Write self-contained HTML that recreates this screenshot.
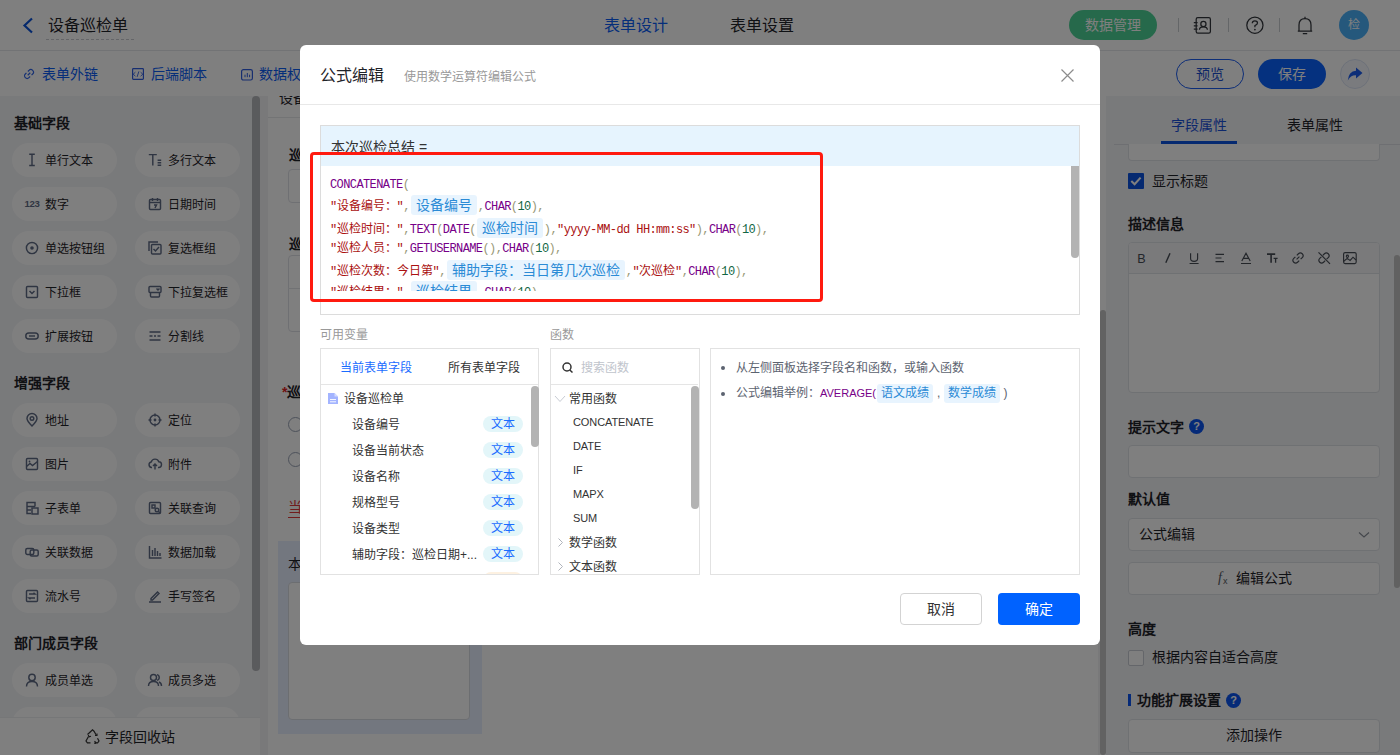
<!DOCTYPE html>
<html lang="zh-CN"><head><meta charset="utf-8">
<style>
*{box-sizing:border-box;margin:0;padding:0}
html,body{width:1400px;height:755px;overflow:hidden;background:#fff;font-family:"Liberation Sans",sans-serif;color:#333}
.abs{position:absolute}
svg{display:block}
/* header */
#hdr{position:absolute;left:0;top:0;width:1400px;height:51px;background:#fff;border-bottom:1px solid #e4e6ea}
#tb{position:absolute;left:0;top:51px;width:1400px;height:44px;background:#fff}
#lp{position:absolute;left:0;top:96px;width:260px;height:659px;background:#f3f4f7}
#cv{position:absolute;left:260px;top:96px;width:846px;height:659px;background:#f2f3f5;overflow:hidden}
#rp{position:absolute;left:1106px;top:96px;width:294px;height:659px;background:#f3f4f7}
.pill{position:absolute;width:105px;height:34px;border-radius:17px;background:#fff;font-size:12px;color:#1f2329;line-height:34px}
.pill .ic{position:absolute;left:12.5px;top:9.5px;width:14px;height:14px;overflow:visible}
.pill .ic path,.pill .ic rect,.pill .ic circle{stroke-width:1.45px}
.pill span{position:absolute;left:33px;top:1px}
.lh{position:absolute;left:14px;font-size:14px;font-weight:bold;color:#1f2329;line-height:16px}
#mask{position:absolute;left:0;top:0;width:1400px;height:755px;background:rgba(0,0,0,.5)}
#modal{position:absolute;left:300px;top:45px;width:800px;height:600px;background:#fff;border-radius:6px}
#red{position:absolute;left:310px;top:152px;width:513px;height:150px;border:3px solid #ff1a0f;border-radius:4px}

#ed{position:absolute;left:20px;top:80px;width:760px;height:190px;border:1px solid #dcdcdc;overflow:hidden}
#code{position:absolute;left:0;top:40px;width:748px;height:125px;overflow:hidden}
.cl{position:absolute;left:9px;height:20px;line-height:20px;white-space:nowrap;font-size:12px}
.cl span{display:inline-block;vertical-align:baseline}
.cf,.cb,.cn,.cs{font-family:"Liberation Mono",monospace;font-size:12px;letter-spacing:-0.6px}
.cf{color:#770088}.cb{color:#997}.cn{color:#116644}.cs{color:#aa1111}
.cz{font-family:"Liberation Sans",sans-serif;font-size:12px;letter-spacing:0}
.tag{background:#e8f4fe;color:#2b8bd6;font-size:14px;padding:0 5px;height:20px;line-height:20px;border-radius:3px;margin:0 1px}
#vbox{position:absolute;left:20px;top:303px;width:219px;height:227px;border:1px solid #e2e2e2}
#fbox{position:absolute;left:250px;top:303px;width:150px;height:227px;border:1px solid #e2e2e2}
#hbox{position:absolute;left:410px;top:303px;width:370px;height:227px;border:1px solid #e2e2e2}
.vrow{position:absolute;left:31px;font-size:12px;line-height:18px;color:#333;white-space:nowrap}
.vtag{position:absolute;left:162px;width:40px;height:16px;border-radius:8px;background:#e3f6f9;color:#1a6cff;font-size:12px;line-height:16px;text-align:center}
.frow{position:absolute;left:22px;font-size:11px;letter-spacing:-0.1px;line-height:18px;color:#333}
.htag{display:inline-block;background:#e8f4fe;color:#2b8bd6;padding:0 4px;height:19px;line-height:19px;border-radius:3px}
</style></head><body>
<div id="hdr">
 <svg class="abs" style="left:22px;top:17px" width="12" height="17" viewBox="0 0 12 17"><path d="M10 1.5 L2.5 8.5 L10 15.5" fill="none" stroke="#0a52d9" stroke-width="2.2"/></svg>
 <div class="abs" style="left:48px;top:15px;font-size:16px;line-height:22px;color:#1f2329">设备巡检单</div>
 <div class="abs" style="left:46px;top:39px;width:88px;border-top:1px dashed #c8cbd0"></div>
 <div class="abs" style="left:604px;top:15px;font-size:16px;line-height:22px;color:#0a5cf5">表单设计</div>
 <div class="abs" style="left:730px;top:15px;font-size:16px;line-height:22px;color:#1f2329">表单设置</div>
 <div class="abs" style="left:1069px;top:10px;width:88px;height:30px;border-radius:15px;background:#4cd296;color:#fff;font-size:14px;line-height:30px;text-align:center">数据管理</div>
 <div class="abs" style="left:1178px;top:18px;width:1px;height:14px;background:#c9ccd1"></div>
 <div class="abs" style="left:1228px;top:18px;width:1px;height:14px;background:#c9ccd1"></div>
 <div class="abs" style="left:1279px;top:18px;width:1px;height:14px;background:#c9ccd1"></div>
 <svg class="abs" style="left:1185px;top:10px" width="135" height="32" viewBox="1185 10 135 32"><g fill="none" stroke="#33363c" stroke-width="1.25">
  <rect x="1196.2" y="17.6" width="14.2" height="15.4" rx="1.6"/>
  <path d="M1193.8 22.5H1197.6M1193.8 25.8H1197.6M1193.8 29.1H1197.6"/>
  <circle cx="1203.4" cy="23.9" r="2.6"/><path d="M1199.4 29.8Q1199.6 26.9 1203.4 26.9Q1207.2 26.9 1207.4 29.8"/>
  <circle cx="1254.9" cy="25.2" r="8.1"/>
  <path d="M1252.3 23.2Q1252.3 20.9 1254.9 20.9Q1257.5 20.9 1257.5 23.1Q1257.5 24.6 1254.9 25.7V27.3"/>
  <path d="M1299 31V25Q1299 18.6 1305 18.6Q1311 18.6 1311 25V31ZM1297.8 31H1312.2" stroke-linejoin="round"/>
  <path d="M1305 16.8V18.4M1302.8 33.6H1307.2"/>
 </g><circle cx="1254.9" cy="29.6" r="0.85" fill="#33363c"/></svg>
 <div class="abs" style="left:1339px;top:10px;width:30px;height:30px;border-radius:15px;background:#4bb0f8;color:#fff;font-size:12px;line-height:31px;text-align:center">检</div>
</div>
<div id="tb">
 <svg class="abs" style="left:23px;top:17px" width="12" height="12" viewBox="0 0 12 12"><g transform="rotate(-45 6 6)" fill="none" stroke="#2f64e8" stroke-width="1.2"><path d="M5 3.4H3.4A2.6 2.6 0 0 0 3.4 8.6H5M7 3.4H8.6A2.6 2.6 0 0 1 8.6 8.6H7M4.2 6H7.8"/></g></svg>
 <div class="abs" style="left:42px;top:13px;font-size:14px;line-height:20px;color:#0a5cf5">表单外链</div>
 <svg class="abs" style="left:132px;top:17px" width="12" height="12" viewBox="0 0 12 12"><rect x="0.6" y="0.6" width="10.8" height="10.8" rx="0.8" fill="none" stroke="#2f5ce0" stroke-width="1.2"/><path d="M3.4 4.2L1.2 6.2L3.4 8.2M8.6 4.2L10.8 6.2L8.6 8.2M6.9 3.4L5.1 8.9" fill="none" stroke="#2f5ce0" stroke-width="0.9"/></svg>
 <div class="abs" style="left:151px;top:13px;font-size:14px;line-height:20px;color:#0a5cf5">后端脚本</div>
 <svg class="abs" style="left:241px;top:18px" width="12" height="12" viewBox="0 0 12 12"><rect x="0.6" y="0.6" width="10.8" height="10.4" rx="1.8" fill="none" stroke="#2f5ce0" stroke-width="1.2"/><path d="M4 5.7V8.2M6.3 4V8.2M8.6 5.7V8.2" stroke="#2f5ce0" stroke-width="1"/></svg>
 <div class="abs" style="left:259px;top:13px;font-size:14px;line-height:20px;color:#0a5cf5">数据权限</div>
 <div class="abs" style="left:1176px;top:8px;width:68px;height:30px;border-radius:15px;border:1px solid #1b5cf0;color:#1b4fd0;font-size:14px;line-height:28px;text-align:center">预览</div>
 <div class="abs" style="left:1258px;top:8px;width:68px;height:30px;border-radius:15px;background:#0a62ff;color:#fff;font-size:14px;line-height:30px;text-align:center">保存</div>
 <div class="abs" style="left:1340px;top:8px;width:30px;height:30px;border-radius:15px;background:#f4f7fd;border:1px solid #dbe3f3"></div>
 <svg class="abs" style="left:1346px;top:15px" width="18" height="16" viewBox="0 0 18 16"><path d="M10 1.5 L16.5 7 L10 12.5 V9.2 Q4.5 9 1.8 14.5 Q2.5 5.5 10 4.8 Z" fill="#1b5cf0"/></svg>
</div>
<div id="lp"><div class="abs" style="left:0;top:-1px;width:100%;height:660px">
 <div class="lh" style="top:20px">基础字段</div>
 <div class="pill" style="left:12px;top:48px"><svg class="ic" viewBox="0 0 14 14"><path d="M4.2 1.3h5.6M4.2 12.4h5.6M7 1.3v11.1" stroke="#5f6b85" stroke-width="1.3" fill="none"/></svg><span>单行文本</span></div>
 <div class="pill" style="left:135px;top:48px"><svg class="ic" viewBox="0 0 14 14"><path d="M0.8 1.6h8M4.8 1.6v11M9.6 7.2h3.6M9.6 9.7h3.6M9.6 12.2h3.6" stroke="#5f6b85" stroke-width="1.3" fill="none"/></svg><span>多行文本</span></div>
 <div class="pill" style="left:12px;top:92px"><svg class="ic" viewBox="0 0 14 14"><text x="-0.5" y="9.8" font-size="9.6" font-weight="bold" letter-spacing="-0.3" font-family="Liberation Sans" fill="#5f6b85">123</text></svg><span>数字</span></div>
 <div class="pill" style="left:135px;top:92px"><svg class="ic" viewBox="0 0 14 14"><rect x="1.5" y="2.5" width="11" height="10" rx="1" fill="none" stroke="#5f6b85" stroke-width="1.3"/><path d="M1.5 5.5h11M4.5 1v3M9.5 1v3M6 8h2.5L7 11" stroke="#5f6b85" stroke-width="1.1" fill="none"/></svg><span>日期时间</span></div>
 <div class="pill" style="left:12px;top:136px"><svg class="ic" viewBox="0 0 14 14"><circle cx="7" cy="7" r="5.6" fill="none" stroke="#5f6b85" stroke-width="1.3"/><circle cx="7" cy="7" r="1.8" fill="#5f6b85"/></svg><span>单选按钮组</span></div>
 <div class="pill" style="left:135px;top:136px"><svg class="ic" viewBox="0 0 14 14"><path d="M1 10V1h9" fill="none" stroke="#5f6b85" stroke-width="1.2"/><rect x="3.5" y="3.5" width="9.5" height="9.5" rx="1" fill="none" stroke="#5f6b85" stroke-width="1.3"/><path d="M5.5 8l2 2 3.5-4" fill="none" stroke="#5f6b85" stroke-width="1.3"/></svg><span>复选框组</span></div>
 <div class="pill" style="left:12px;top:180px"><svg class="ic" viewBox="0 0 14 14"><rect x="1.5" y="1.5" width="11" height="11" rx="1" fill="none" stroke="#5f6b85" stroke-width="1.3"/><path d="M4.5 6l2.5 2.5L9.5 6" fill="none" stroke="#5f6b85" stroke-width="1.2"/></svg><span>下拉框</span></div>
 <div class="pill" style="left:135px;top:180px"><svg class="ic" viewBox="0 0 14 14"><rect x="1" y="1.5" width="12" height="6" rx="1" fill="none" stroke="#5f6b85" stroke-width="1.3"/><path d="M2.5 7.5v3.5q0 1 1 1h7q1 0 1-1V7.5M8.5 3.5l1.5 1.5 1.5-1.5" fill="none" stroke="#5f6b85" stroke-width="1.3"/></svg><span>下拉复选框</span></div>
 <div class="pill" style="left:12px;top:224px"><svg class="ic" viewBox="0 0 14 14"><rect x="0.8" y="4" width="12.4" height="6" rx="3" fill="none" stroke="#5f6b85" stroke-width="1.4"/><path d="M4 7h6" stroke="#5f6b85" stroke-width="1.2"/></svg><span>扩展按钮</span></div>
 <div class="pill" style="left:135px;top:224px"><svg class="ic" viewBox="0 0 14 14"><path d="M1.5 3h11M1.5 11h11M1.5 7h3M6 7h2M9.5 7h3" stroke="#5f6b85" stroke-width="1.3" fill="none"/></svg><span>分割线</span></div>
 <div class="lh" style="top:280px">增强字段</div>
 <div class="pill" style="left:12px;top:308px"><svg class="ic" viewBox="0 0 14 14"><path d="M7 13Q2 8 2 5.5A5 5 0 0 1 12 5.5Q12 8 7 13Z" fill="none" stroke="#5f6b85" stroke-width="1.3"/><circle cx="7" cy="5.5" r="1.8" fill="none" stroke="#5f6b85" stroke-width="1.2"/></svg><span>地址</span></div>
 <div class="pill" style="left:135px;top:308px"><svg class="ic" viewBox="0 0 14 14"><circle cx="7" cy="7" r="5" fill="none" stroke="#5f6b85" stroke-width="1.3"/><circle cx="7" cy="7" r="1.4" fill="#5f6b85"/><path d="M7 0.5v3M7 10.5v3M0.5 7h3M10.5 7h3" stroke="#5f6b85" stroke-width="1.3"/></svg><span>定位</span></div>
 <div class="pill" style="left:12px;top:352px"><svg class="ic" viewBox="0 0 14 14"><rect x="1.5" y="1.5" width="11" height="11" rx="1" fill="none" stroke="#5f6b85" stroke-width="1.3"/><path d="M1.5 9.5l3.5-3 2.5 2 5-4" fill="none" stroke="#5f6b85" stroke-width="1.1"/><circle cx="4.5" cy="4.5" r="0.9" fill="#5f6b85"/></svg><span>图片</span></div>
 <div class="pill" style="left:135px;top:352px"><svg class="ic" viewBox="0 0 14 14"><path d="M4 10.5H3.5A2.8 2.8 0 0 1 3.2 5 A4 4 0 0 1 10.8 4.8 A2.8 2.8 0 0 1 10.5 10.5H10M7 12.5V7M5 9l2-2 2 2" fill="none" stroke="#5f6b85" stroke-width="1.3"/></svg><span>附件</span></div>
 <div class="pill" style="left:12px;top:396px"><svg class="ic" viewBox="0 0 14 14"><path d="M10 5.5V1.5H2V12.5H6M2 5.5h8M2 9h4" fill="none" stroke="#5f6b85" stroke-width="1.3"/><rect x="7" y="7" width="6" height="6" fill="none" stroke="#5f6b85" stroke-width="1.3"/></svg><span>子表单</span></div>
 <div class="pill" style="left:135px;top:396px"><svg class="ic" viewBox="0 0 14 14"><rect x="1.5" y="1.5" width="11" height="11" rx="1" fill="none" stroke="#5f6b85" stroke-width="1.3"/><path d="M4 4h3v3H4z" fill="none" stroke="#5f6b85" stroke-width="1.1"/><circle cx="9" cy="9" r="1.8" fill="none" stroke="#5f6b85" stroke-width="1.1"/><path d="M10.3 10.3l2 2" stroke="#5f6b85" stroke-width="1.1"/></svg><span>关联查询</span></div>
 <div class="pill" style="left:12px;top:440px"><svg class="ic" viewBox="0 0 14 14"><rect x="0.8" y="3.5" width="8" height="6" rx="1.5" fill="none" stroke="#5f6b85" stroke-width="1.3"/><rect x="5.2" y="5" width="8" height="6" rx="1.5" fill="none" stroke="#5f6b85" stroke-width="1.3"/></svg><span>关联数据</span></div>
 <div class="pill" style="left:135px;top:440px"><svg class="ic" viewBox="0 0 14 14"><path d="M1.5 1v12h12M4.5 5v6M7 3v8M9.5 6v5M12 8v3" fill="none" stroke="#5f6b85" stroke-width="1.3"/></svg><span>数据加载</span></div>
 <div class="pill" style="left:12px;top:484px"><svg class="ic" viewBox="0 0 14 14"><rect x="1.5" y="1.5" width="11" height="11" rx="1" fill="none" stroke="#5f6b85" stroke-width="1.3"/><path d="M4 5h6l-1.5-1.2M10 9H4l1.5 1.2" fill="none" stroke="#5f6b85" stroke-width="1.1"/></svg><span>流水号</span></div>
 <div class="pill" style="left:135px;top:484px"><svg class="ic" viewBox="0 0 14 14"><path d="M3 9.5l6.5-6.5 1.5 1.5L4.5 11H3zM1 13h12" fill="none" stroke="#5f6b85" stroke-width="1.3"/></svg><span>手写签名</span></div>
 <div class="lh" style="top:540px">部门成员字段</div>
 <div class="pill" style="left:12px;top:568px"><svg class="ic" viewBox="0 0 14 14"><circle cx="7" cy="4.5" r="3.2" fill="none" stroke="#5f6b85" stroke-width="1.3"/><path d="M1.5 13.5Q1.5 8.5 7 8.5Q12.5 8.5 12.5 13.5" fill="none" stroke="#5f6b85" stroke-width="1.3"/></svg><span>成员单选</span></div>
 <div class="pill" style="left:135px;top:568px"><svg class="ic" viewBox="0 0 14 14"><circle cx="5.5" cy="4.5" r="3" fill="none" stroke="#5f6b85" stroke-width="1.3"/><path d="M0.5 13Q0.5 8.5 5.5 8.5Q10.5 8.5 10.5 13M9 1.6A3 3 0 0 1 9 7.4M11 9Q13.5 10 13.5 13" fill="none" stroke="#5f6b85" stroke-width="1.3"/></svg><span>成员多选</span></div>
 <div class="pill" style="left:12px;top:612px"><svg class="ic" viewBox="0 0 14 14"></svg><span></span></div>
 <div class="pill" style="left:135px;top:612px"><svg class="ic" viewBox="0 0 14 14"></svg><span></span></div>
 <div class="abs" style="left:252px;top:1px;width:8px;height:575px;border-radius:4px;background:#b4b6ba"></div>
 <div class="abs" style="left:0;top:622px;width:260px;height:38px;background:#fff;border-top:1px solid #eceef1">
  <svg class="abs" style="left:85px;top:11px" width="15" height="15" viewBox="0 0 15 15"><path d="M6 2.2 L7.5 0.8 L9 2.2 L11.5 6.5 M12.5 9.2 L14 12 L12.6 13.8 H9.5 M5.5 13.8 H2.4 L1 12 L3.5 7.5 M2.5 5.5 L6 2.2" fill="none" stroke="#333" stroke-width="1.2"/><path d="M10 6.5 h2 v-2 M9.5 12.2 l1.5 1.6 -1.5 1.2 M3.2 6 l1 1.8 1.8-0.6" fill="none" stroke="#333" stroke-width="1.1"/></svg>
  <div class="abs" style="left:105px;top:10px;font-size:14px;line-height:18px;color:#1f2329">字段回收站</div>
 </div>
</div></div>
<div id="cv"><div class="abs" style="left:0;top:-1px;width:100%;height:660px">
 <div class="abs" style="left:8px;top:0;width:830px;height:660px;background:#fff"></div>
 <div class="abs" style="left:19px;top:-6px;font-size:14px;line-height:18px;color:#1f2329">设备巡检单</div>
 <div class="abs" style="left:8px;top:22px;width:830px;border-top:1px solid #e6e8eb"></div>
 <div class="abs" style="left:29px;top:52px;font-size:14px;font-weight:bold;line-height:16px;color:#1f2329">巡检人员</div>
 <div class="abs" style="left:28px;top:74px;width:300px;height:34px;border:1px solid #dfe1e6;border-radius:4px;background:#fff"></div>
 <div class="abs" style="left:29px;top:141px;font-size:14px;font-weight:bold;line-height:16px;color:#1f2329">巡检时间</div>
 <div class="abs" style="left:28px;top:160px;width:300px;height:77px;border:1px solid #dfe1e6;border-radius:4px;background:#fff"></div><div class="abs" style="left:28px;top:193px;width:300px;border-top:1px solid #e3e5e9"></div>
 <div class="abs" style="left:22px;top:289px;font-size:14px;font-weight:bold;line-height:16px;color:#1f2329"><span style="color:#e02020">*</span>巡检结果</div>
 <div class="abs" style="left:28px;top:322px;width:15px;height:15px;border:1px solid #9aa3b5;border-radius:50%;background:#fff"></div>
 <div class="abs" style="left:28px;top:357px;width:15px;height:15px;border:1px solid #9aa3b5;border-radius:50%;background:#fff"></div>
 <div class="abs" style="left:28px;top:404px;font-size:14px;line-height:16px;color:#e23b3b">当日巡检次数</div><div class="abs" style="left:28px;top:422px;width:84px;height:1px;background:#e23b3b"></div>
 <div class="abs" style="left:18px;top:446px;width:204px;height:193px;background:#e6efff"></div>
 <div class="abs" style="left:28px;top:461px;font-size:14px;line-height:16px;color:#1f2329">本次巡检总结</div>
 <div class="abs" style="left:28px;top:487px;width:182px;height:138px;border:1px solid #d9dce2;border-radius:4px;background:#fff"></div>
 <div class="abs" style="left:840px;top:0;width:6px;height:660px;background:#fff"></div>
 <div class="abs" style="left:840px;top:215px;width:6px;height:445px;border-radius:3px;background:#c4c4c4"></div>
</div></div>
<div id="rp"><div class="abs" style="left:0;top:-1px;width:100%;height:660px">
 <div class="abs" style="left:65px;top:22px;font-size:14px;line-height:16px;color:#1a50d8">字段属性</div>
 <div class="abs" style="left:181px;top:22px;font-size:14px;line-height:16px;color:#1f2329">表单属性</div>
 <div class="abs" style="left:8px;top:49px;width:286px;border-top:1px solid #dcdfe4"></div>
 <div class="abs" style="left:55px;top:46px;width:76px;height:3px;background:#0a52e0"></div>
 <div class="abs" style="left:22px;top:49px;width:252px;height:17px;border:1px solid #dfe2e7;border-top:none;border-radius:0 0 4px 4px;background:#fff"></div>
 <div class="abs" style="left:22px;top:78px;width:16px;height:16px;border-radius:1px;background:#0a52e0"></div>
 <svg class="abs" style="left:22px;top:78px" width="16" height="16" viewBox="0 0 16 16"><path d="M3.3 8 L6.6 11.2 L12.6 4.6" fill="none" stroke="#fff" stroke-width="2.1"/></svg>
 <div class="abs" style="left:46px;top:77px;font-size:14px;line-height:18px;color:#1f2329">显示标题</div>
 <div class="abs" style="left:22px;top:121px;font-size:14px;font-weight:bold;line-height:16px;color:#1f2329">描述信息</div>
 <div class="abs" style="left:22px;top:147px;width:252px;height:151px;border:1px solid #dfe2e7;border-radius:4px;background:#fff;overflow:hidden">
  <div class="abs" style="left:0;top:0;width:252px;height:31px;background:#f4f5f7;border-bottom:1px solid #dfe2e7"></div>
  <svg class="abs" style="left:-1px;top:-1px" width="252" height="32" viewBox="1128 242 252 32"><g fill="none" stroke="#474c55" stroke-width="1.15">
   <text x="1137.3" y="262.6" font-size="12.6" font-family="Liberation Sans" fill="#474c55" stroke="none">B</text>
   <path d="M1170 253.3 L1165.8 262.7" stroke-width="1.4"/>
   <path d="M1190.6 253.2 V258.6 Q1190.6 261.4 1194.1 261.4 Q1197.6 261.4 1197.6 258.6 V253.2 M1189.6 263.5 H1198.6"/>
   <path d="M1215.5 254.3 H1224 M1215.5 258 H1221.5 M1215.5 261.6 H1224"/>
   <path d="M1241.8 261 L1246 253.3 L1250.2 261 M1243.2 258.4 H1248.8 M1241 263.5 H1251"/>
   <path d="M1267 254.1 H1275.2 M1271.1 254.1 V262.8" stroke-width="1.6"/><path d="M1273.6 258.3 H1277.6 M1275.6 258.3 V262.8" stroke-width="1.3"/>
   <g transform="rotate(-45 1298 258)"><path d="M1297 255.3 H1294.7 A2.7 2.7 0 0 0 1294.7 260.7 H1297 M1299 255.3 H1301.3 A2.7 2.7 0 0 1 1301.3 260.7 H1299 M1296 258 H1300"/></g>
   <g transform="rotate(-45 1324 258)"><path d="M1323 255.3 H1320.7 A2.7 2.7 0 0 0 1320.7 260.7 H1323 M1325 255.3 H1327.3 A2.7 2.7 0 0 1 1327.3 260.7 H1325"/></g><path d="M1318.5 252.3 L1330 263.8"/>
   <rect x="1343.6" y="252.6" width="12.6" height="11" rx="1.5"/><circle cx="1347.4" cy="256.2" r="1.1"/><path d="M1343.8 261.3 L1347.2 258.4 L1350.1 260.4 L1353 257.2 L1356 260"/>
  </g></svg>
 </div>
 <div class="abs" style="left:22px;top:324px;font-size:14px;font-weight:bold;line-height:16px;color:#1f2329">提示文字</div>
 <div class="abs" style="left:83px;top:324px;width:15px;height:15px;border-radius:50%;background:#0b55f0;color:#fff;font-size:11px;font-weight:bold;line-height:15px;text-align:center">?</div>
 <div class="abs" style="left:22px;top:350px;width:252px;height:33px;border:1px solid #dfe2e7;border-radius:4px;background:#fff"></div>
 <div class="abs" style="left:22px;top:396px;font-size:14px;font-weight:bold;line-height:16px;color:#1f2329">默认值</div>
 <div class="abs" style="left:22px;top:423px;width:252px;height:33px;border:1px solid #dfe2e7;border-radius:4px;background:#fff"></div>
 <div class="abs" style="left:33px;top:431px;font-size:14px;line-height:17px;color:#1f2329">公式编辑</div>
 <svg class="abs" style="left:252px;top:436px" width="12" height="8" viewBox="0 0 12 8"><path d="M1 1.5 L6 6 L11 1.5" fill="none" stroke="#8a8f99" stroke-width="1.2"/></svg>
 <div class="abs" style="left:22px;top:467px;width:252px;height:33px;border:1px solid #dfe2e7;border-radius:4px;background:#fff"></div>
 <div class="abs" style="left:112px;top:474px;font-size:14px;line-height:18px;color:#55595f;font-style:italic;font-family:'Liberation Serif'">f<span style="font-size:9px;font-style:normal;font-family:'Liberation Sans';vertical-align:-2px;margin-left:1px">x</span></div>
 <div class="abs" style="left:130px;top:475px;font-size:14px;line-height:17px;color:#1f2329">编辑公式</div>
 <div class="abs" style="left:22px;top:526px;font-size:14px;font-weight:bold;line-height:16px;color:#1f2329">高度</div>
 <div class="abs" style="left:22px;top:555px;width:16px;height:16px;border:1px solid #c9cdd4;border-radius:2px;background:#fff"></div>
 <div class="abs" style="left:46px;top:553px;font-size:14px;line-height:18px;color:#1f2329">根据内容自适合高度</div>
 <div class="abs" style="left:22px;top:599px;width:3px;height:12px;background:#0b55f0"></div>
 <div class="abs" style="left:31px;top:597px;font-size:14px;font-weight:bold;line-height:16px;color:#1f2329">功能扩展设置</div>
 <div class="abs" style="left:120px;top:598px;width:15px;height:15px;border-radius:50%;background:#0b55f0;color:#fff;font-size:11px;font-weight:bold;line-height:15px;text-align:center">?</div>
 <div class="abs" style="left:22px;top:624px;width:252px;height:34px;border:1px solid #dfe2e7;border-radius:4px;background:#fff"></div>
 <div class="abs" style="left:120px;top:632px;font-size:14px;line-height:17px;color:#1f2329">添加操作</div>
 <div class="abs" style="left:288px;top:160px;width:6px;height:333px;border-radius:3px;background:#c2c2c2"></div>
</div></div>
<div id="mask"></div>
<div id="modal">
 <div class="abs" style="left:20px;top:23px;font-size:16px;line-height:16px;color:#1f2329">公式编辑</div>
 <div class="abs" style="left:104px;top:26px;font-size:12px;line-height:12px;color:#999">使用数学运算符编辑公式</div>
 <svg class="abs" style="left:761px;top:24px" width="13" height="13" viewBox="0 0 13 13"><path d="M0.5 0.5L12.5 12.5M12.5 0.5L0.5 12.5" stroke="#8c8c8c" stroke-width="1.2"/></svg>
 <div class="abs" style="left:0;top:59px;width:800px;border-top:1px solid #e8e8e8"></div>
 <div id="ed">
  <div class="abs" style="left:0;top:0;width:758px;height:40px;background:#e6f4fe"></div>
  <div class="abs" style="left:10px;top:13px;font-size:14px;line-height:16px;color:#333">本次巡检总结 =</div>
  <div id="code">
<div class="cl" style="top:7.5px"><span class="cf">CONCATENATE</span><span class="cb">(</span></div>
<div class="cl" style="top:29px"><span class="cs">"</span><span class="cs cz">设备编号：</span><span class="cs">"</span><span class="cb">,</span><span class="tag">设备编号</span><span class="cb">,</span><span class="cf">CHAR</span><span class="cb">(</span><span class="cn">10</span><span class="cb">),</span></div>
<div class="cl" style="top:51.5px"><span class="cs">"</span><span class="cs cz">巡检时间：</span><span class="cs">"</span><span class="cb">,</span><span class="cf">TEXT</span><span class="cb">(</span><span class="cf">DATE</span><span class="cb">(</span><span class="tag">巡检时间</span><span class="cb">),</span><span class="cs">"yyyy-MM-dd HH:mm:ss"</span><span class="cb">),</span><span class="cf">CHAR</span><span class="cb">(</span><span class="cn">10</span><span class="cb">),</span></div>
<div class="cl" style="top:72px"><span class="cs">"</span><span class="cs cz">巡检人员：</span><span class="cs">"</span><span class="cb">,</span><span class="cf">GETUSERNAME</span><span class="cb">(),</span><span class="cf">CHAR</span><span class="cb">(</span><span class="cn">10</span><span class="cb">),</span></div>
<div class="cl" style="top:93.5px"><span class="cs">"</span><span class="cs cz">巡检次数：今日第</span><span class="cs">"</span><span class="cb">,</span><span class="tag">辅助字段：当日第几次巡检</span><span class="cb">,</span><span class="cs">"</span><span class="cs cz">次巡检</span><span class="cs">"</span><span class="cb">,</span><span class="cf">CHAR</span><span class="cb">(</span><span class="cn">10</span><span class="cb">),</span></div>
<div class="cl" style="top:115px"><span class="cs">"</span><span class="cs cz">巡检结果：</span><span class="cs">"</span><span class="cb">,</span><span class="tag">巡检结果</span><span class="cb">,</span><span class="cf">CHAR</span><span class="cb">(</span><span class="cn">10</span><span class="cb">),</span></div>
  </div>
  <div class="abs" style="left:750px;top:40px;width:8px;height:92px;border-radius:0 0 4px 4px;background:#b3b3b3"></div>
 </div>
 <div class="abs" style="left:20px;top:284px;font-size:12px;line-height:12px;color:#999">可用变量</div>
 <div class="abs" style="left:250px;top:284px;font-size:12px;line-height:12px;color:#999">函数</div>
 <div id="vbox">
  <div class="abs" style="left:0;top:0;width:217px;height:36px;border-bottom:1px solid #e5e5e5"></div>
  <div class="abs" style="left:19px;top:13px;font-size:12px;line-height:12px;color:#1a6cff">当前表单字段</div>
  <div class="abs" style="left:127px;top:13px;font-size:12px;line-height:12px;color:#333">所有表单字段</div>
  <div class="abs" style="left:0;top:37px;width:217px;height:188px;overflow:hidden">
   <svg class="abs" style="left:7px;top:7px" width="10" height="11" viewBox="0 0 10 11"><path d="M0 0H6.5L10 3.5V11H0Z" fill="#a3b4ff"/><path d="M6.5 0V3.5H10" fill="#d5dcff"/><path d="M2 6.5H8M2 8.8H8" stroke="#fff" stroke-width="0.9"/></svg>
   <div class="abs" style="left:23px;top:7px;font-size:12px;line-height:12px;color:#333">设备巡检单</div>
   <div class="vrow" style="top:30.4px">设备编号</div><div class="vtag" style="top:30.4px">文本</div><div class="vrow" style="top:56.4px">设备当前状态</div><div class="vtag" style="top:56.4px">文本</div><div class="vrow" style="top:82.4px">设备名称</div><div class="vtag" style="top:82.4px">文本</div><div class="vrow" style="top:108.4px">规格型号</div><div class="vtag" style="top:108.4px">文本</div><div class="vrow" style="top:134.4px">设备类型</div><div class="vtag" style="top:134.4px">文本</div><div class="vrow" style="top:160.4px">辅助字段：巡检日期+...</div><div class="vtag" style="top:160.4px">文本</div><div class="vtag" style="top:186.4px;background:#fdf1e1;color:#f08a00"></div>
  </div>
  <div class="abs" style="left:210px;top:37px;width:8px;height:61px;border-radius:4px;background:#b3b3b3"></div>
 </div>
 <div id="fbox">
  <div class="abs" style="left:0;top:0;width:147px;height:36px;border-bottom:1px solid #e5e5e5"></div>
  <svg class="abs" style="left:11px;top:13px" width="12" height="11" viewBox="0 0 12 11"><circle cx="5" cy="5" r="4" fill="none" stroke="#333" stroke-width="1.5"/><path d="M7.8 8L10.5 10.5" stroke="#333" stroke-width="1.5"/></svg>
  <div class="abs" style="left:30px;top:13px;font-size:12px;line-height:12px;color:#c0c4cc">搜索函数</div>
  <div class="abs" style="left:0;top:37px;width:147px;height:188px;overflow:hidden">
   <svg class="abs" style="left:3px;top:9px" width="12" height="8" viewBox="0 0 12 8"><path d="M1 1L6 6.5L11 1" fill="none" stroke="#c8ccd4" stroke-width="1"/></svg>
   <div class="abs" style="left:18px;top:7px;font-size:12px;line-height:12px;color:#333">常用函数</div>
   <div class="frow" style="top:27.0px">CONCATENATE</div><div class="frow" style="top:51.0px">DATE</div><div class="frow" style="top:75.0px">IF</div><div class="frow" style="top:99.0px">MAPX</div><div class="frow" style="top:123.0px">SUM</div>
   <svg class="abs" style="left:7px;top:152px" width="5" height="9" viewBox="0 0 5 9"><path d="M0.5 0.5L4.5 4.5L0.5 8.5" fill="none" stroke="#b0b4bc" stroke-width="1"/></svg>
   <div class="abs" style="left:18px;top:151px;font-size:12px;line-height:12px;color:#333">数学函数</div>
   <svg class="abs" style="left:7px;top:176px" width="5" height="9" viewBox="0 0 5 9"><path d="M0.5 0.5L4.5 4.5L0.5 8.5" fill="none" stroke="#b0b4bc" stroke-width="1"/></svg>
   <div class="abs" style="left:18px;top:175px;font-size:12px;line-height:12px;color:#333">文本函数</div>
  </div>
  <div class="abs" style="left:140px;top:37px;width:8px;height:123px;border-radius:4px;background:#b3b3b3"></div>
 </div>
 <div id="hbox">
  <div class="abs" style="left:10px;top:17px;width:4px;height:4px;border-radius:2px;background:#5c6370"></div>
  <div class="abs" style="left:25px;top:13px;font-size:12px;line-height:12px;color:#5c6370">从左侧面板选择字段名和函数，或输入函数</div>
  <div class="abs" style="left:10px;top:43px;width:4px;height:4px;border-radius:2px;background:#5c6370"></div>
  <div class="abs" style="left:25px;top:35px;font-size:12px;line-height:19px;color:#5c6370;white-space:nowrap">公式编辑举例：<span style="color:#770088;font-size:11px">AVERAGE(</span><span class="htag" style="margin-left:1px">语文成绩</span><span style="margin:0 4px 0 4px">,</span><span class="htag">数学成绩</span><span style="margin-left:3px">)</span></div>
 </div>
 <div class="abs" style="left:600px;top:548px;width:82px;height:32px;border:1px solid #d3d3d3;border-radius:4px;color:#333;font-size:14px;line-height:30px;text-align:center">取消</div>
 <div class="abs" style="left:698px;top:548px;width:82px;height:32px;background:#0062ff;border-radius:4px;color:#fff;font-size:14px;font-weight:500;line-height:32px;text-align:center">确定</div>
</div>
<div id="red"></div>
</body></html>
